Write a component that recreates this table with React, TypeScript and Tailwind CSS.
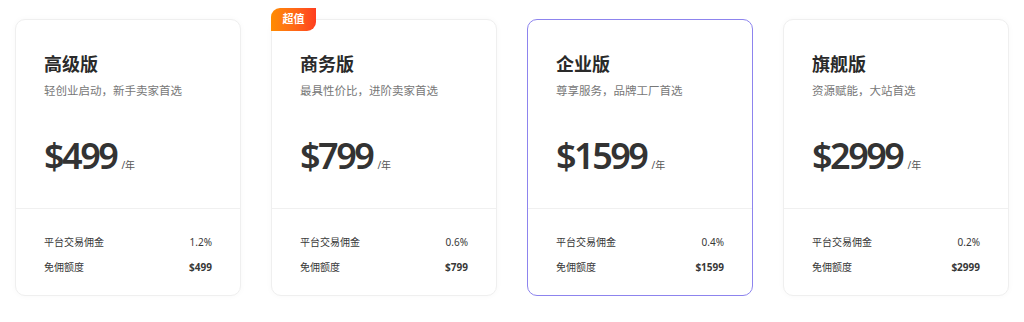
import React from "react";

const plans = [
  { name: "高级版", desc: "轻创业启动，新手卖家首选", price: "$499", rate: "1.2%" },
  { name: "商务版", desc: "最具性价比，进阶卖家首选", price: "$799", rate: "0.6%", badge: "超值" },
  { name: "企业版", desc: "尊享服务，品牌工厂首选", price: "$1599", rate: "0.4%", active: true },
  { name: "旗舰版", desc: "资源赋能，大站首选", price: "$2999", rate: "0.2%" },
];

const font = { fontFamily: '"Noto Sans", "Noto Sans CJK SC", sans-serif' };

const App = () => {
  return (
    <div className="w-[1024px] h-[322px] bg-white" style={font}>
      <div className="flex gap-[30px] px-[15px] pt-[19px]">
        {plans.map((plan) => (
          <div
            key={plan.name}
            className={`relative w-[226px] h-[277px] rounded-[10px] bg-white border ${
              plan.active ? "border-[#8d84ee]" : "border-[#efefef] shadow-[0_0_6px_rgba(0,0,0,0.03)]"
            }`}
          >
            {plan.badge && (
              <div className="absolute -top-[12px] -left-[1px] w-[45px] h-[23px] flex items-center justify-center rounded-tl-[9px] rounded-br-[9px] bg-gradient-to-r from-[#ff8c00] to-[#ff3d1f] text-white text-[11px] font-bold">
                {plan.badge}
              </div>
            )}
            <div className="h-[189px] px-[28px] pt-[31px] border-b border-[#f0f0f0]">
              <h3 className="text-[18px] leading-[26px] font-bold text-[#2a2a2a]">{plan.name}</h3>
              <p className="mt-[6px] text-[11.5px] leading-[16px] text-[#777]">{plan.desc}</p>
              <div className="mt-[38px] flex items-baseline">
                <span className="text-[36px] leading-[38px] font-semibold text-[#333] tracking-[-2.5px]">
                  {plan.price}
                </span>
                <span className="ml-[5px] text-[10px] text-[#555]">/年</span>
              </div>
            </div>
            <div className="px-[28px] pt-[25px] text-[10px] text-[#383838]">
              <div className="flex justify-between leading-[16px]">
                <span>平台交易佣金</span>
                <span>{plan.rate}</span>
              </div>
              <div className="flex justify-between leading-[16px] mt-[9px]">
                <span>免佣额度</span>
                <span className="font-bold">{plan.price}</span>
              </div>
            </div>
          </div>
        ))}
      </div>
    </div>
  );
};

export default App;
